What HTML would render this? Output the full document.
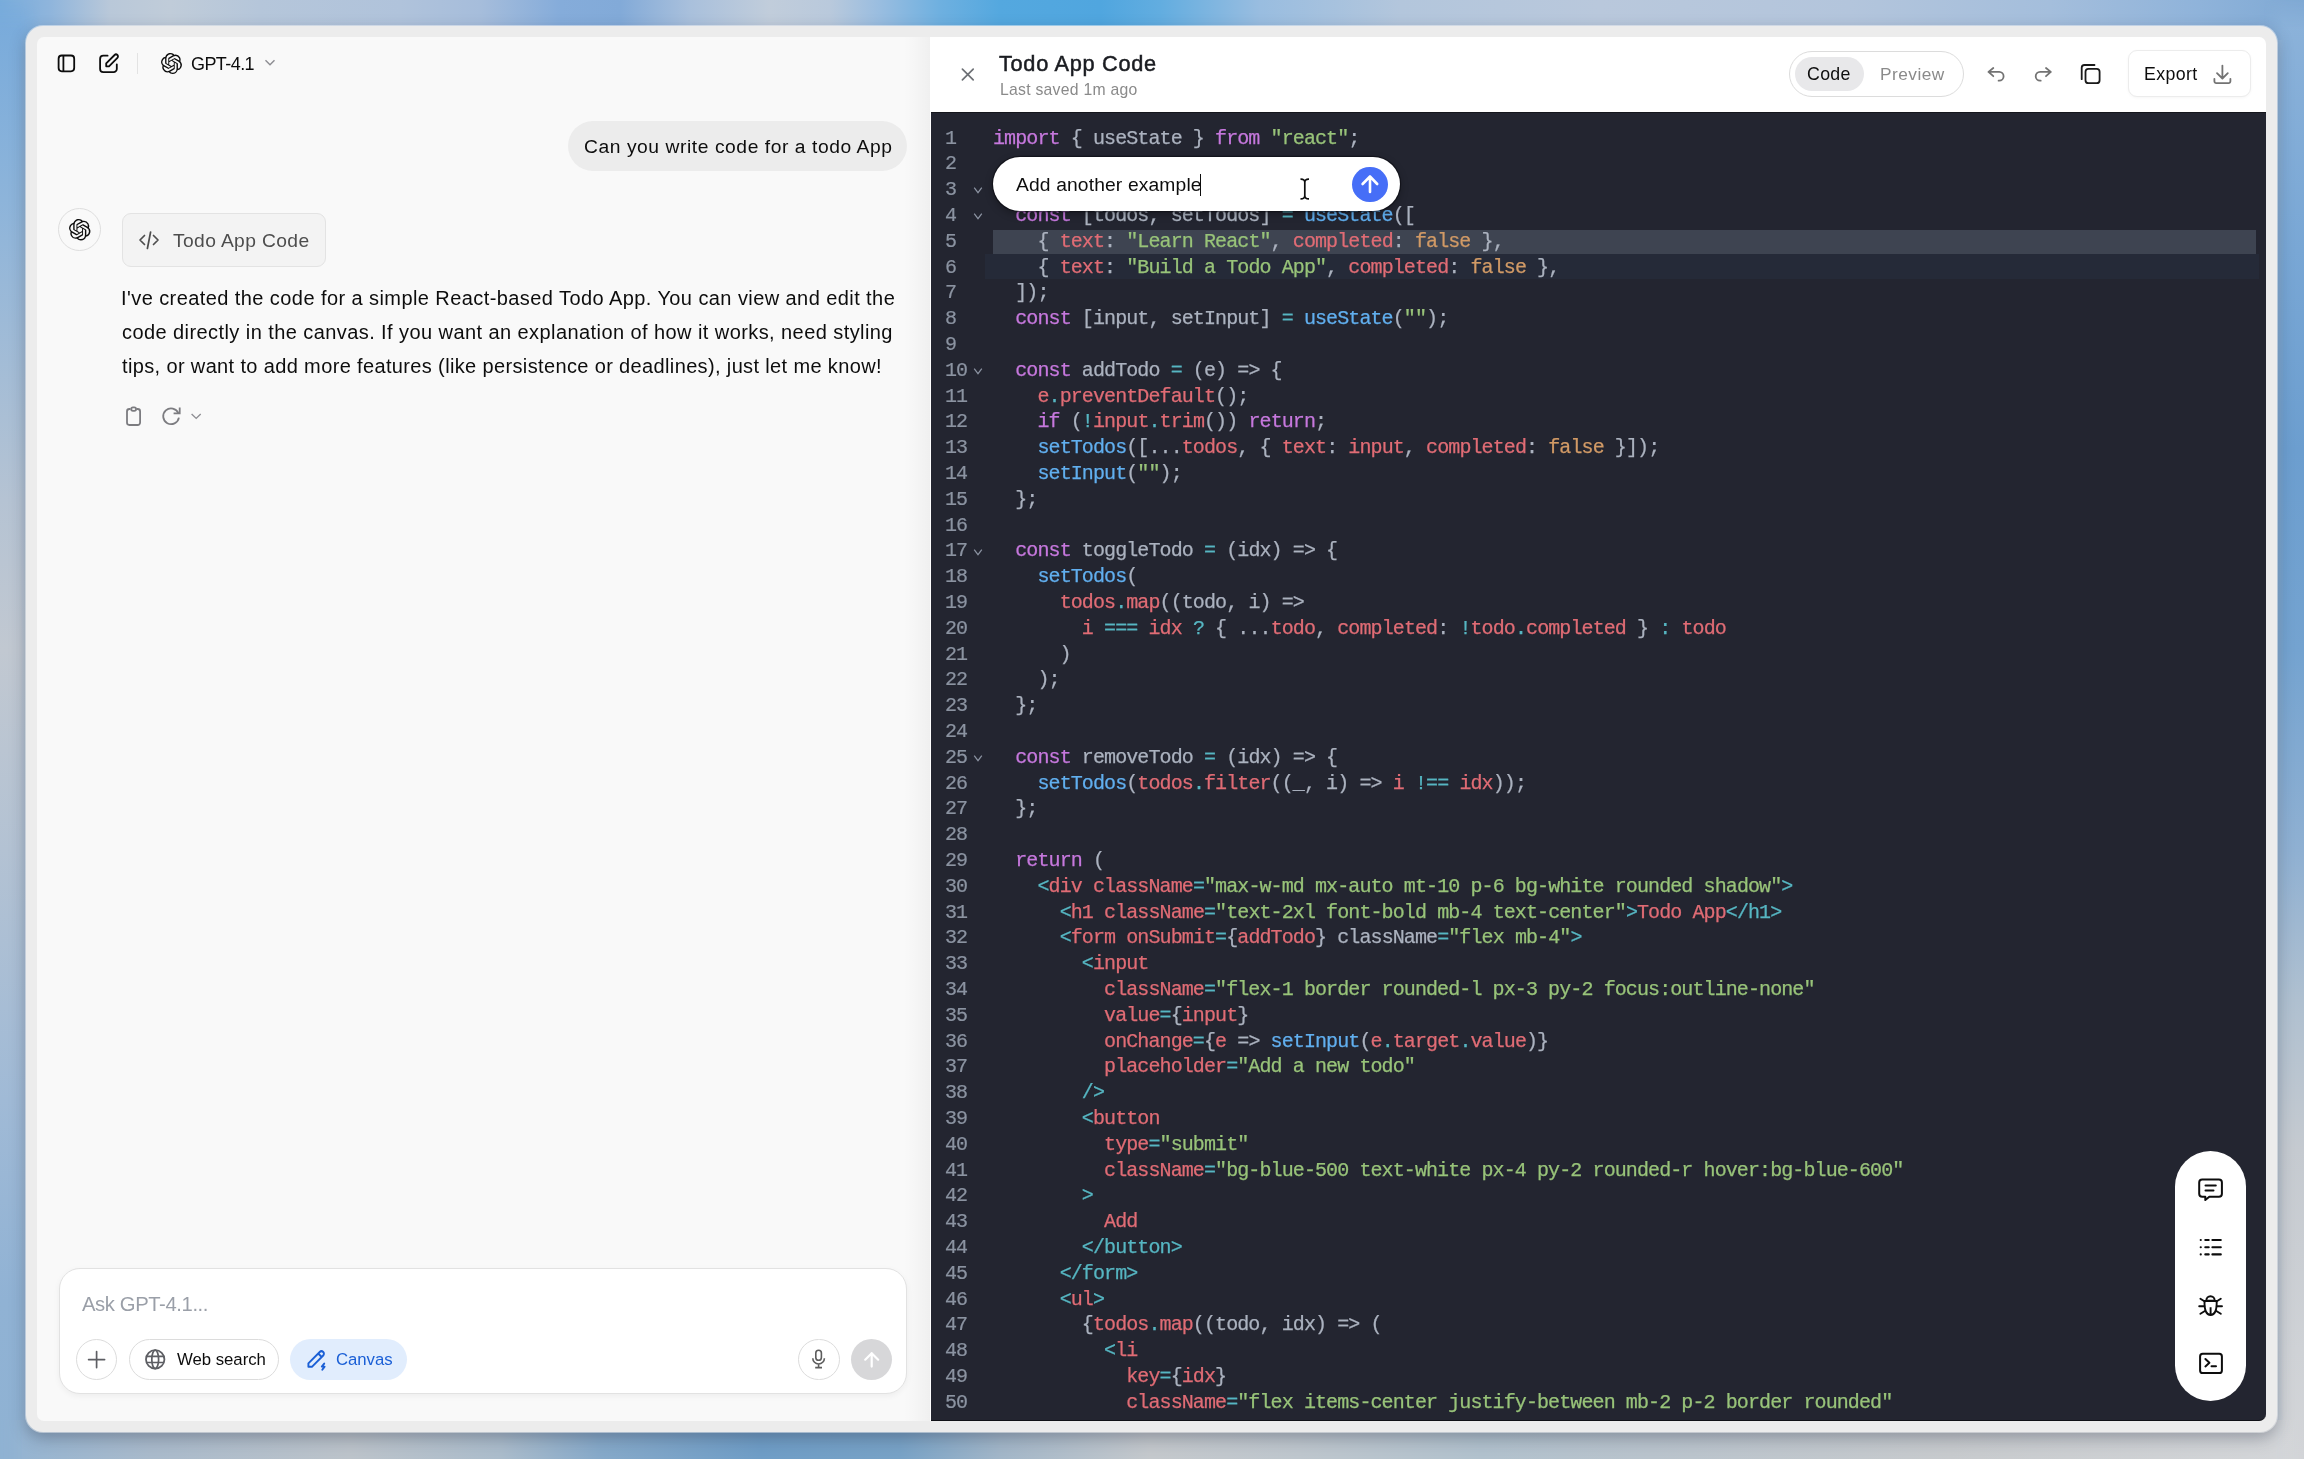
<!DOCTYPE html>
<html><head><meta charset="utf-8">
<style>
*{box-sizing:border-box;margin:0;padding:0}
html,body{width:2304px;height:1459px;overflow:hidden}
body{position:relative;font-family:"Liberation Sans",sans-serif;background:#a9bfd8}
.abs{position:absolute}
#bgt{left:0;top:0;width:2304px;height:40px;background:linear-gradient(90deg,#78acdc 0px,#8fb5dc 50px,#b9c8d9 110px,#c0ccd9 170px,#b5c6da 260px,#b0c3db 400px,#a6bddb 480px,#85acda 560px,#82aad8 620px,#a9c0dc 690px,#c1cddb 770px,#b9c9dc 830px,#99bde0 880px,#6eb0e0 940px,#54a8df 1000px,#50a6df 1100px,#62ade0 1160px,#99bde0 1260px,#b3c6dc 1400px,#b9c8dc 1600px,#b3c5dc 1850px,#a4bedc 2050px,#8fb3da 2200px,#7fa9d4 2304px)}
#bgl{-webkit-mask-image:linear-gradient(180deg,transparent 0px,#000 30px),linear-gradient(90deg,#000 0px,#000 20px,transparent 40px);-webkit-mask-composite:source-in;mask-composite:intersect;left:0;top:0;width:40px;height:1459px;background:linear-gradient(180deg,#77aadb 0px,#8db4da 200px,#b5c3d3 500px,#c1c8d1 650px,#b3c2d3 850px,#a0bad6 1100px,#90b2d4 1300px,#8fb2d3 1459px)}
#bgr{-webkit-mask-image:linear-gradient(180deg,transparent 0px,#000 30px),linear-gradient(270deg,#000 0px,#000 20px,transparent 40px);-webkit-mask-composite:source-in;mask-composite:intersect;left:2264px;top:0;width:40px;height:1459px;background:linear-gradient(180deg,#8db3da 0px,#79a7d5 250px,#6c9ecf 450px,#74a3d0 650px,#8fb0d2 850px,#afc0d0 1000px,#c5cad0 1150px,#cfd2d6 1350px,#d3d5d8 1459px)}
#bgb{-webkit-mask-image:linear-gradient(90deg,transparent 0px,#000 28px,#000 2276px,transparent 2304px);left:0;top:1420px;width:2304px;height:39px;background:linear-gradient(90deg,#92b3d2 0px,#a9bacb 150px,#bcc3ca 350px,#abbccb 500px,#86a9c9 600px,#6f9dc6 760px,#78a2c6 900px,#a2b6c8 1000px,#c4c8cc 1150px,#bec6cd 1300px,#b1c1cd 1480px,#b9c3cc 1650px,#c7cacd 1950px,#d4d6d9 2304px)}
#win{left:26px;top:26px;width:2251px;height:1406px;background:#ececec;border-radius:17px;box-shadow:0 0 0 1px rgba(255,255,255,.45),0 6px 16px rgba(40,50,70,.35)}
#left{left:37px;top:37px;width:894px;height:1384px;background:#f9f9f9;border-radius:7px 0 0 7px}
#rhead{left:931px;top:37px;width:1335px;height:75px;background:#fff;border-radius:0 7px 0 0}
#code{left:931px;top:111.5px;width:1335px;height:1309.5px;background:#232530;border-radius:0 0 7px 0;overflow:hidden;border-top:1px solid #15161c;border-bottom:1px solid #101116}
.ln{position:absolute;left:14px;will-change:transform;-webkit-text-stroke:0.2px currentColor;height:25.8px;line-height:25.8px;font-family:"Liberation Mono",monospace;font-size:20px;letter-spacing:-0.9px;color:#8b93a1;white-space:pre}
.cl{position:absolute;left:62px;will-change:transform;-webkit-text-stroke:0.25px currentColor;height:25.8px;line-height:25.8px;font-family:"Liberation Mono",monospace;font-size:20px;letter-spacing:-0.9px;color:#abb2bf;white-space:pre}
.fold{position:absolute;left:42.3px}
.t{position:absolute;white-space:nowrap;line-height:1;will-change:transform}
svg{overflow:visible}
</style></head><body>
<div id="bgt" class="abs"></div>
<div id="bgl" class="abs"></div>
<div id="bgr" class="abs"></div>
<div id="bgb" class="abs"></div>
<div id="win" class="abs"></div>
<div id="left" class="abs"></div>
<div class="abs" style="left:903px;top:37px;width:27px;height:1384px;background:linear-gradient(90deg,rgba(0,0,0,0),rgba(0,0,0,.01) 40%,rgba(0,0,0,.04))"></div>
<div class="abs" style="left:929.8px;top:37px;width:1.2px;height:1384px;background:#fff"></div>
<div id="rhead" class="abs"></div>

<!-- left header icons -->
<svg class="abs" style="left:50px;top:45px" width="80" height="40" viewBox="0 0 80 40">
  <rect x="8.6" y="10.5" width="15.6" height="15.8" rx="3.2" fill="none" stroke="#0d0d0d" stroke-width="1.8"/>
  <line x1="13.4" y1="10.5" x2="13.4" y2="26.3" stroke="#0d0d0d" stroke-width="1.8"/>
  <path d="M57.6 10.7 H53.3 a3.2 3.2 0 0 0 -3.2 3.2 V23.9 a3.2 3.2 0 0 0 3.2 3.2 H63.6 a3.2 3.2 0 0 0 3.2 -3.2 V19.3" fill="none" stroke="#0d0d0d" stroke-width="1.8" stroke-linecap="round"/>
  <path d="M56.2 21.3 V18.4 L64.6 10.0 a1.95 1.95 0 0 1 2.8 2.8 L59.0 21.3 Z" fill="none" stroke="#0d0d0d" stroke-width="1.8" stroke-linejoin="round"/>
</svg>
<div class="abs" style="left:137px;top:53px;width:1px;height:21px;background:#e3e3e3"></div>
<svg class="abs" style="left:160.8px;top:52.9px" width="21" height="21" viewBox="0 0 24 24"><path fill="#0d0d0d" d="M22.2819 9.8211a5.9847 5.9847 0 0 0-.5157-4.9108 6.0462 6.0462 0 0 0-6.5098-2.9A6.0651 6.0651 0 0 0 4.9807 4.1818a5.9847 5.9847 0 0 0-3.9977 2.9 6.0462 6.0462 0 0 0 .7427 7.0966 5.98 5.98 0 0 0 .511 4.9107 6.051 6.051 0 0 0 6.5146 2.9001A5.9847 5.9847 0 0 0 13.2599 24a6.0557 6.0557 0 0 0 5.7718-4.2058 5.9894 5.9894 0 0 0 3.9977-2.9001 6.0557 6.0557 0 0 0-.7475-7.0729zm-9.022 12.6081a4.4755 4.4755 0 0 1-2.8764-1.0408l.1419-.0804 4.7783-2.7582a.7948.7948 0 0 0 .3927-.6813v-6.7369l2.02 1.1686a.071.071 0 0 1 .038.052v5.5826a4.504 4.504 0 0 1-4.4945 4.4944zm-9.6607-4.1254a4.4708 4.4708 0 0 1-.5346-3.0137l.142.0852 4.783 2.7582a.7712.7712 0 0 0 .7806 0l5.8428-3.3685v2.3324a.0804.0804 0 0 1-.0332.0615L9.74 19.9502a4.4992 4.4992 0 0 1-6.1408-1.6464zM2.3408 7.8956a4.485 4.485 0 0 1 2.3655-1.9728V11.6a.7664.7664 0 0 0 .3879.6765l5.8144 3.3543-2.0201 1.1685a.0757.0757 0 0 1-.071 0l-4.8303-2.7865A4.504 4.504 0 0 1 2.3408 7.872zm16.5963 3.8558L13.1038 8.364 15.1192 7.2a.0757.0757 0 0 1 .071 0l4.8303 2.7913a4.4944 4.4944 0 0 1-.6765 8.1042v-5.6772a.79.79 0 0 0-.407-.667zm2.0107-3.0231l-.142-.0852-4.7735-2.7818a.7759.7759 0 0 0-.7854 0L9.409 9.2297V6.8974a.0662.0662 0 0 1 .0284-.0615l4.8303-2.7866a4.4992 4.4992 0 0 1 6.6802 4.66zM8.3065 12.863l-2.02-1.1638a.0804.0804 0 0 1-.038-.0567V6.0742a4.4992 4.4992 0 0 1 7.3757-3.4537l-.142.0805L8.704 5.459a.7948.7948 0 0 0-.3927.6813zm1.0976-2.3654l2.602-1.4998 2.6069 1.4998v2.9994l-2.5974 1.4997-2.6067-1.4997Z"/></svg>
<div class="t" style="left:190.5px;top:54.6px;font-size:18.0px;letter-spacing:-0.567px;color:#0d0d0d;">GPT-4.1</div>
<svg class="abs" style="left:262px;top:57px" width="16" height="12" viewBox="0 0 16 12"><path d="M3.5 3.2 L8 7.8 L12.5 3.2" fill="none" stroke="#8e8e93" stroke-width="1.4"/></svg>

<!-- user bubble -->
<div class="abs" style="left:568px;top:121px;width:339px;height:50px;border-radius:25px;background:#ececec"></div>
<div class="t" style="left:583.7px;top:136.55px;font-size:19.25px;letter-spacing:0.562px;color:#0d0d0d;">Can you write code for a todo App</div>

<!-- assistant -->
<div class="abs" style="left:58px;top:207.5px;width:43px;height:43px;border-radius:50%;border:1px solid #dedede;background:#f9f9f9"></div>
<svg class="abs" style="left:69px;top:218.5px" width="21.5" height="21.5" viewBox="0 0 24 24"><path fill="#0d0d0d" d="M22.2819 9.8211a5.9847 5.9847 0 0 0-.5157-4.9108 6.0462 6.0462 0 0 0-6.5098-2.9A6.0651 6.0651 0 0 0 4.9807 4.1818a5.9847 5.9847 0 0 0-3.9977 2.9 6.0462 6.0462 0 0 0 .7427 7.0966 5.98 5.98 0 0 0 .511 4.9107 6.051 6.051 0 0 0 6.5146 2.9001A5.9847 5.9847 0 0 0 13.2599 24a6.0557 6.0557 0 0 0 5.7718-4.2058 5.9894 5.9894 0 0 0 3.9977-2.9001 6.0557 6.0557 0 0 0-.7475-7.0729zm-9.022 12.6081a4.4755 4.4755 0 0 1-2.8764-1.0408l.1419-.0804 4.7783-2.7582a.7948.7948 0 0 0 .3927-.6813v-6.7369l2.02 1.1686a.071.071 0 0 1 .038.052v5.5826a4.504 4.504 0 0 1-4.4945 4.4944zm-9.6607-4.1254a4.4708 4.4708 0 0 1-.5346-3.0137l.142.0852 4.783 2.7582a.7712.7712 0 0 0 .7806 0l5.8428-3.3685v2.3324a.0804.0804 0 0 1-.0332.0615L9.74 19.9502a4.4992 4.4992 0 0 1-6.1408-1.6464zM2.3408 7.8956a4.485 4.485 0 0 1 2.3655-1.9728V11.6a.7664.7664 0 0 0 .3879.6765l5.8144 3.3543-2.0201 1.1685a.0757.0757 0 0 1-.071 0l-4.8303-2.7865A4.504 4.504 0 0 1 2.3408 7.872zm16.5963 3.8558L13.1038 8.364 15.1192 7.2a.0757.0757 0 0 1 .071 0l4.8303 2.7913a4.4944 4.4944 0 0 1-.6765 8.1042v-5.6772a.79.79 0 0 0-.407-.667zm2.0107-3.0231l-.142-.0852-4.7735-2.7818a.7759.7759 0 0 0-.7854 0L9.409 9.2297V6.8974a.0662.0662 0 0 1 .0284-.0615l4.8303-2.7866a4.4992 4.4992 0 0 1 6.6802 4.66zM8.3065 12.863l-2.02-1.1638a.0804.0804 0 0 1-.038-.0567V6.0742a4.4992 4.4992 0 0 1 7.3757-3.4537l-.142.0805L8.704 5.459a.7948.7948 0 0 0-.3927.6813zm1.0976-2.3654l2.602-1.4998 2.6069 1.4998v2.9994l-2.5974 1.4997-2.6067-1.4997Z"/></svg>
<div class="abs" style="left:122px;top:213px;width:204px;height:54px;border-radius:9px;background:#f3f3f3;border:1px solid #e3e3e3"></div>
<svg class="abs" style="left:137px;top:229px" width="24" height="22" viewBox="0 0 24 22"><path d="M7.5 6.5 L3 11 L7.5 15.5 M16.5 6.5 L21 11 L16.5 15.5 M13.6 3 L10.4 19.5" fill="none" stroke="#4d4d4d" stroke-width="1.7" stroke-linecap="round" stroke-linejoin="round"/></svg>
<div class="t" style="left:173.1px;top:230.65px;font-size:19.25px;letter-spacing:0.375px;color:#4d4d4d;">Todo App Code</div>

<div class="t" style="left:121.1px;top:287.8px;font-size:20.0px;letter-spacing:0.423px;color:#0d0d0d">I've created the code for a simple React-based Todo App. You can view and edit the</div>
<div class="t" style="left:121.5px;top:321.7px;font-size:20.0px;letter-spacing:0.424px;color:#0d0d0d">code directly in the canvas. If you want an explanation of how it works, need styling</div>
<div class="t" style="left:121.6px;top:356.0px;font-size:20.0px;letter-spacing:0.361px;color:#0d0d0d">tips, or want to add more features (like persistence or deadlines), just let me know!</div>

<svg class="abs" style="left:115px;top:395px" width="100" height="40" viewBox="0 0 100 40">
  <path d="M15.4 14 H14.4 a2.4 2.4 0 0 0 -2.4 2.4 V27.6 a2.4 2.4 0 0 0 2.4 2.4 H22.7 a2.4 2.4 0 0 0 2.4 -2.4 V16.4 a2.4 2.4 0 0 0 -2.4 -2.4 H21.7" fill="none" stroke="#7c7c80" stroke-width="1.8"/>
  <rect x="16.2" y="12.3" width="4.9" height="3.6" rx="1.8" fill="none" stroke="#7c7c80" stroke-width="1.8"/>
  <path d="M63.9 22.6 A7.9 7.9 0 1 1 63.4 18.2" fill="none" stroke="#7c7c80" stroke-width="1.8"/>
  <path d="M64.7 12.4 V18.4 H58.6" fill="none" stroke="#7c7c80" stroke-width="1.8"/>
  <path d="M76.6 19.1 L81.2 23.4 L85.7 19.1" fill="none" stroke="#8e8e93" stroke-width="1.4"/>
</svg>

<!-- input box -->
<div class="abs" style="left:59px;top:1267.5px;width:847.5px;height:126.5px;border-radius:21px;background:#fff;border:1px solid #e2e2e2;box-shadow:0 2px 6px rgba(0,0,0,.05)"></div>
<div class="t" style="left:81.7px;top:1294.4px;font-size:20.25px;letter-spacing:-0.4px;color:#9a9fa8;">Ask GPT-4.1...</div>
<div class="abs" style="left:76.3px;top:1338.8px;width:41px;height:41px;border-radius:50%;border:1px solid #dcdcdc"></div>
<svg class="abs" style="left:86px;top:1349px" width="22" height="22" viewBox="0 0 22 22"><path d="M10.6 2.6 V18.6 M2.6 10.6 H18.6" fill="none" stroke="#5d5e63" stroke-width="1.7" stroke-linecap="round"/></svg>
<div class="abs" style="left:128.8px;top:1338.8px;width:150px;height:41px;border-radius:21px;border:1px solid #dcdcdc"></div>
<svg class="abs" style="left:143px;top:1347px" width="26" height="26" viewBox="0 0 26 26">
  <circle cx="12.2" cy="12.4" r="9.2" fill="none" stroke="#5d5e63" stroke-width="1.8"/>
  <ellipse cx="12.2" cy="12.4" rx="3.4" ry="9.2" fill="none" stroke="#5d5e63" stroke-width="1.7"/>
  <path d="M3.6 9.3 H20.8 M3.6 15.5 H20.8" fill="none" stroke="#5d5e63" stroke-width="1.7"/>
</svg>
<div class="t" style="left:176.5px;top:1352.25px;font-size:16.75px;letter-spacing:-0.022px;color:#0d0d0d;">Web search</div>
<div class="abs" style="left:290.2px;top:1338.8px;width:117px;height:41px;border-radius:21px;background:#e1edfd"></div>
<svg class="abs" style="left:300px;top:1345px" width="30" height="28" viewBox="0 0 30 28">
  <path d="M8.4 21.8 L8.4 18.3 L19.7 7.0 a2.4 2.4 0 0 1 3.5 3.5 L11.9 21.8 Z M18.2 8.5 L21.7 12" fill="none" stroke="#1a5fd6" stroke-width="1.9" stroke-linejoin="round"/>
  <path d="M24.2 18.6 L21.8 21.6 L24.6 21.6 L22.3 24.8" fill="none" stroke="#1a5fd6" stroke-width="1.9" stroke-linejoin="round" stroke-linecap="round"/>
</svg>
<div class="t" style="left:336.2px;top:1352.25px;font-size:16.75px;letter-spacing:-0.04px;color:#1a5fd6;">Canvas</div>
<div class="abs" style="left:798.2px;top:1338.8px;width:41.4px;height:41.4px;border-radius:50%;border:1px solid #dcdcdc"></div>
<svg class="abs" style="left:808px;top:1348px" width="22" height="22" viewBox="0 0 22 22">
  <rect x="7.8" y="2.2" width="5.6" height="10" rx="2.8" fill="none" stroke="#5d5d5d" stroke-width="1.6"/>
  <path d="M4.8 10.2 a5.8 5.8 0 0 0 11.6 0 M10.6 16 V19.6 M7.2 19.6 H14" fill="none" stroke="#5d5d5d" stroke-width="1.6"/>
</svg>
<div class="abs" style="left:851px;top:1338.8px;width:41px;height:41px;border-radius:50%;background:#d7d7d9"></div>
<svg class="abs" style="left:861px;top:1349px" width="22" height="22" viewBox="0 0 22 22"><path d="M10.7 17.6 V4.2 M4.2 10.7 L10.7 4.2 L17.2 10.7" fill="none" stroke="#fff" stroke-width="2.2" stroke-linecap="round" stroke-linejoin="round"/></svg>

<!-- right header -->
<svg class="abs" style="left:958px;top:65px" width="20" height="20" viewBox="0 0 20 20"><path d="M4.4 4.2 L15.2 14.8 M15.2 4.2 L4.4 14.8" fill="none" stroke="#6d7075" stroke-width="1.7" stroke-linecap="round"/></svg>
<div class="t" style="left:999.0px;top:52.7px;font-size:21.75px;letter-spacing:0.692px;-webkit-text-stroke:0.5px #1a1c21;color:#1a1c21;">Todo App Code</div>
<div class="t" style="left:999.6px;top:82.35px;font-size:15.75px;letter-spacing:0.262px;color:#8a8a8a;">Last saved 1m ago</div>
<div class="abs" style="left:1788.7px;top:50.9px;width:175.5px;height:46px;border-radius:23px;border:1px solid #dcdcdc;background:#fff"></div>
<div class="abs" style="left:1794.5px;top:56.9px;width:69.5px;height:34px;border-radius:17px;background:#e8e8ea"></div>
<div class="t" style="left:1807.1px;top:66.2px;font-size:17.75px;letter-spacing:0.333px;color:#0d0d0d;">Code</div>
<div class="t" style="left:1880.0px;top:65.65px;font-size:17.25px;letter-spacing:0.483px;color:#8a8a8a;">Preview</div>
<svg class="abs" style="left:1980px;top:55px" width="130" height="40" viewBox="0 0 130 40">
  <path d="M13.3 13 L8.5 16.9 L13.3 21.2 M8.5 16.9 H19.2 a4.4 4.4 0 0 1 0 8.8 H18.6" fill="none" stroke="#737373" stroke-width="1.8" stroke-linecap="round" stroke-linejoin="round"/>
  <path d="M66 13 L70.8 16.9 L66 21.2 M70.8 16.9 H60.1 a4.4 4.4 0 0 0 0 8.8 H60.7" fill="none" stroke="#737373" stroke-width="1.8" stroke-linecap="round" stroke-linejoin="round"/>
  <path d="M102.4 70 Z" />
  <path d="M102.6 24.2 a0 0 0 0 1 0 0 V12.8 a2.8 2.8 0 0 1 2.8 -2.8 H115.4" fill="none" stroke="#1a1a1a" stroke-width="1.8" stroke-linecap="round" transform="translate(-0.9,0)"/>
  <rect x="105.5" y="13.8" width="14.1" height="14.4" rx="3" fill="none" stroke="#1a1a1a" stroke-width="1.8"/>
</svg>
<div class="abs" style="left:2127.6px;top:50.3px;width:123px;height:47.2px;border-radius:9px;border:1px solid #ececec;background:#fff;box-shadow:0 1px 3px rgba(0,0,0,.04)"></div>
<div class="t" style="left:2144.0px;top:66.4px;font-size:17.75px;letter-spacing:0.4px;color:#0d0d0d;">Export</div>
<svg class="abs" style="left:2210px;top:62px" width="26" height="26" viewBox="0 0 26 26"><path d="M12.4 3.6 V16.4 M7 11.1 L12.4 16.5 L17.8 11.1 M4.4 16.8 V19.3 a1.8 1.8 0 0 0 1.8 1.8 H18.6 a1.8 1.8 0 0 0 1.8 -1.8 V16.8" fill="none" stroke="#737373" stroke-width="1.8" stroke-linecap="round" stroke-linejoin="round"/></svg>

<!-- code -->
<div id="code" class="abs">
<div class="abs" style="left:61.6px;top:117.4px;width:1263.4px;height:23.8px;background:#3e4451"></div>
<div class="abs" style="left:54px;top:141.2px;width:1273.7px;height:25.8px;background:#252a38"></div>
<div class="ln" style="top:13.03px">1</div>
<div class="cl" style="top:13.03px"><span style="color:#c678dd">import</span> { useState } <span style="color:#c678dd">from</span> <span style="color:#98c379">&quot;react&quot;</span>;</div>
<div class="ln" style="top:38.83px">2</div>
<div class="cl" style="top:38.83px"></div>
<div class="ln" style="top:64.63px">3</div>
<svg class="fold" style="top:73.83px" width="10" height="8" viewBox="0 0 10 8"><path d="M1.2 1.6 L5 6.6 L8.8 1.6" fill="none" stroke="#8b93a1" stroke-width="1.25"/></svg>
<div class="cl" style="top:64.63px"><span style="color:#c678dd">export default function</span> <span style="color:#61afef">TodoApp</span>() {</div>
<div class="ln" style="top:90.43px">4</div>
<svg class="fold" style="top:99.63px" width="10" height="8" viewBox="0 0 10 8"><path d="M1.2 1.6 L5 6.6 L8.8 1.6" fill="none" stroke="#8b93a1" stroke-width="1.25"/></svg>
<div class="cl" style="top:90.43px">  <span style="color:#c678dd">const</span> [todos, setTodos] <span style="color:#56b6c2">=</span> <span style="color:#61afef">useState</span>([</div>
<div class="ln" style="top:116.23px">5</div>
<div class="cl" style="top:116.23px">    { <span style="color:#e06c75">text</span>: <span style="color:#98c379">&quot;Learn React&quot;</span>, <span style="color:#e06c75">completed</span>: <span style="color:#d19a66">false</span> },</div>
<div class="ln" style="top:142.03px">6</div>
<div class="cl" style="top:142.03px">    { <span style="color:#e06c75">text</span>: <span style="color:#98c379">&quot;Build a Todo App&quot;</span>, <span style="color:#e06c75">completed</span>: <span style="color:#d19a66">false</span> },</div>
<div class="ln" style="top:167.83px">7</div>
<div class="cl" style="top:167.83px">  ]);</div>
<div class="ln" style="top:193.63px">8</div>
<div class="cl" style="top:193.63px">  <span style="color:#c678dd">const</span> [input, setInput] <span style="color:#56b6c2">=</span> <span style="color:#61afef">useState</span>(<span style="color:#98c379">&quot;&quot;</span>);</div>
<div class="ln" style="top:219.43px">9</div>
<div class="cl" style="top:219.43px"></div>
<div class="ln" style="top:245.23px">10</div>
<svg class="fold" style="top:254.43px" width="10" height="8" viewBox="0 0 10 8"><path d="M1.2 1.6 L5 6.6 L8.8 1.6" fill="none" stroke="#8b93a1" stroke-width="1.25"/></svg>
<div class="cl" style="top:245.23px">  <span style="color:#c678dd">const</span> addTodo <span style="color:#56b6c2">=</span> (e) =&gt; {</div>
<div class="ln" style="top:271.03px">11</div>
<div class="cl" style="top:271.03px">    <span style="color:#e06c75">e</span><span style="color:#56b6c2">.</span><span style="color:#e06c75">preventDefault</span>();</div>
<div class="ln" style="top:296.83px">12</div>
<div class="cl" style="top:296.83px">    <span style="color:#c678dd">if</span> (<span style="color:#56b6c2">!</span><span style="color:#e06c75">input</span><span style="color:#56b6c2">.</span><span style="color:#e06c75">trim</span>()) <span style="color:#c678dd">return</span>;</div>
<div class="ln" style="top:322.63px">13</div>
<div class="cl" style="top:322.63px">    <span style="color:#61afef">setTodos</span>([...<span style="color:#e06c75">todos</span>, { <span style="color:#e06c75">text</span>: <span style="color:#e06c75">input</span>, <span style="color:#e06c75">completed</span>: <span style="color:#d19a66">false</span> }]);</div>
<div class="ln" style="top:348.43px">14</div>
<div class="cl" style="top:348.43px">    <span style="color:#61afef">setInput</span>(<span style="color:#98c379">&quot;&quot;</span>);</div>
<div class="ln" style="top:374.23px">15</div>
<div class="cl" style="top:374.23px">  };</div>
<div class="ln" style="top:400.03px">16</div>
<div class="cl" style="top:400.03px"></div>
<div class="ln" style="top:425.83px">17</div>
<svg class="fold" style="top:435.03px" width="10" height="8" viewBox="0 0 10 8"><path d="M1.2 1.6 L5 6.6 L8.8 1.6" fill="none" stroke="#8b93a1" stroke-width="1.25"/></svg>
<div class="cl" style="top:425.83px">  <span style="color:#c678dd">const</span> toggleTodo <span style="color:#56b6c2">=</span> (idx) =&gt; {</div>
<div class="ln" style="top:451.63px">18</div>
<div class="cl" style="top:451.63px">    <span style="color:#61afef">setTodos</span>(</div>
<div class="ln" style="top:477.43px">19</div>
<div class="cl" style="top:477.43px">      <span style="color:#e06c75">todos</span><span style="color:#56b6c2">.</span><span style="color:#e06c75">map</span>((todo, i) =&gt;</div>
<div class="ln" style="top:503.23px">20</div>
<div class="cl" style="top:503.23px">        <span style="color:#e06c75">i</span> <span style="color:#56b6c2">===</span> <span style="color:#e06c75">idx</span> <span style="color:#56b6c2">?</span> { ...<span style="color:#e06c75">todo</span>, <span style="color:#e06c75">completed</span>: <span style="color:#56b6c2">!</span><span style="color:#e06c75">todo</span><span style="color:#56b6c2">.</span><span style="color:#e06c75">completed</span> } <span style="color:#56b6c2">:</span> <span style="color:#e06c75">todo</span></div>
<div class="ln" style="top:529.03px">21</div>
<div class="cl" style="top:529.03px">      )</div>
<div class="ln" style="top:554.83px">22</div>
<div class="cl" style="top:554.83px">    );</div>
<div class="ln" style="top:580.63px">23</div>
<div class="cl" style="top:580.63px">  };</div>
<div class="ln" style="top:606.43px">24</div>
<div class="cl" style="top:606.43px"></div>
<div class="ln" style="top:632.23px">25</div>
<svg class="fold" style="top:641.43px" width="10" height="8" viewBox="0 0 10 8"><path d="M1.2 1.6 L5 6.6 L8.8 1.6" fill="none" stroke="#8b93a1" stroke-width="1.25"/></svg>
<div class="cl" style="top:632.23px">  <span style="color:#c678dd">const</span> removeTodo <span style="color:#56b6c2">=</span> (idx) =&gt; {</div>
<div class="ln" style="top:658.03px">26</div>
<div class="cl" style="top:658.03px">    <span style="color:#61afef">setTodos</span>(<span style="color:#e06c75">todos</span><span style="color:#56b6c2">.</span><span style="color:#e06c75">filter</span>((_, i) =&gt; <span style="color:#e06c75">i</span> <span style="color:#56b6c2">!==</span> <span style="color:#e06c75">idx</span>));</div>
<div class="ln" style="top:683.83px">27</div>
<div class="cl" style="top:683.83px">  };</div>
<div class="ln" style="top:709.63px">28</div>
<div class="cl" style="top:709.63px"></div>
<div class="ln" style="top:735.43px">29</div>
<div class="cl" style="top:735.43px">  <span style="color:#c678dd">return</span> (</div>
<div class="ln" style="top:761.23px">30</div>
<div class="cl" style="top:761.23px">    <span style="color:#56b6c2">&lt;</span><span style="color:#e06c75">div</span> <span style="color:#e06c75">className</span><span style="color:#56b6c2">=</span><span style="color:#98c379">&quot;max-w-md mx-auto mt-10 p-6 bg-white rounded shadow&quot;</span><span style="color:#56b6c2">&gt;</span></div>
<div class="ln" style="top:787.03px">31</div>
<div class="cl" style="top:787.03px">      <span style="color:#56b6c2">&lt;</span><span style="color:#e06c75">h1</span> <span style="color:#e06c75">className</span><span style="color:#56b6c2">=</span><span style="color:#98c379">&quot;text-2xl font-bold mb-4 text-center&quot;</span><span style="color:#56b6c2">&gt;</span><span style="color:#e06c75">Todo App</span><span style="color:#56b6c2">&lt;/h1&gt;</span></div>
<div class="ln" style="top:812.83px">32</div>
<div class="cl" style="top:812.83px">      <span style="color:#56b6c2">&lt;</span><span style="color:#e06c75">form</span> <span style="color:#e06c75">onSubmit</span><span style="color:#56b6c2">=</span>{<span style="color:#e06c75">addTodo</span>} className<span style="color:#56b6c2">=</span><span style="color:#98c379">&quot;flex mb-4&quot;</span><span style="color:#56b6c2">&gt;</span></div>
<div class="ln" style="top:838.63px">33</div>
<div class="cl" style="top:838.63px">        <span style="color:#56b6c2">&lt;</span><span style="color:#e06c75">input</span></div>
<div class="ln" style="top:864.43px">34</div>
<div class="cl" style="top:864.43px">          <span style="color:#e06c75">className</span><span style="color:#56b6c2">=</span><span style="color:#98c379">&quot;flex-1 border rounded-l px-3 py-2 focus:outline-none&quot;</span></div>
<div class="ln" style="top:890.23px">35</div>
<div class="cl" style="top:890.23px">          <span style="color:#e06c75">value</span><span style="color:#56b6c2">=</span>{<span style="color:#e06c75">input</span>}</div>
<div class="ln" style="top:916.03px">36</div>
<div class="cl" style="top:916.03px">          <span style="color:#e06c75">onChange</span><span style="color:#56b6c2">=</span>{<span style="color:#e06c75">e</span> =&gt; <span style="color:#61afef">setInput</span>(<span style="color:#e06c75">e</span><span style="color:#56b6c2">.</span><span style="color:#e06c75">target</span><span style="color:#56b6c2">.</span><span style="color:#e06c75">value</span>)}</div>
<div class="ln" style="top:941.83px">37</div>
<div class="cl" style="top:941.83px">          <span style="color:#e06c75">placeholder</span><span style="color:#56b6c2">=</span><span style="color:#98c379">&quot;Add a new todo&quot;</span></div>
<div class="ln" style="top:967.63px">38</div>
<div class="cl" style="top:967.63px">        <span style="color:#56b6c2">/&gt;</span></div>
<div class="ln" style="top:993.43px">39</div>
<div class="cl" style="top:993.43px">        <span style="color:#56b6c2">&lt;</span><span style="color:#e06c75">button</span></div>
<div class="ln" style="top:1019.23px">40</div>
<div class="cl" style="top:1019.23px">          <span style="color:#e06c75">type</span><span style="color:#56b6c2">=</span><span style="color:#98c379">&quot;submit&quot;</span></div>
<div class="ln" style="top:1045.03px">41</div>
<div class="cl" style="top:1045.03px">          <span style="color:#e06c75">className</span><span style="color:#56b6c2">=</span><span style="color:#98c379">&quot;bg-blue-500 text-white px-4 py-2 rounded-r hover:bg-blue-600&quot;</span></div>
<div class="ln" style="top:1070.83px">42</div>
<div class="cl" style="top:1070.83px">        <span style="color:#56b6c2">&gt;</span></div>
<div class="ln" style="top:1096.63px">43</div>
<div class="cl" style="top:1096.63px">          <span style="color:#e06c75">Add</span></div>
<div class="ln" style="top:1122.43px">44</div>
<div class="cl" style="top:1122.43px">        <span style="color:#56b6c2">&lt;/button&gt;</span></div>
<div class="ln" style="top:1148.23px">45</div>
<div class="cl" style="top:1148.23px">      <span style="color:#56b6c2">&lt;/form&gt;</span></div>
<div class="ln" style="top:1174.03px">46</div>
<div class="cl" style="top:1174.03px">      <span style="color:#56b6c2">&lt;</span><span style="color:#e06c75">ul</span><span style="color:#56b6c2">&gt;</span></div>
<div class="ln" style="top:1199.83px">47</div>
<div class="cl" style="top:1199.83px">        {<span style="color:#e06c75">todos</span><span style="color:#56b6c2">.</span><span style="color:#e06c75">map</span>((todo, idx) =&gt; (</div>
<div class="ln" style="top:1225.63px">48</div>
<div class="cl" style="top:1225.63px">          <span style="color:#56b6c2">&lt;</span><span style="color:#e06c75">li</span></div>
<div class="ln" style="top:1251.43px">49</div>
<div class="cl" style="top:1251.43px">            <span style="color:#e06c75">key</span><span style="color:#56b6c2">=</span>{<span style="color:#e06c75">idx</span>}</div>
<div class="ln" style="top:1277.23px">50</div>
<div class="cl" style="top:1277.23px">            <span style="color:#e06c75">className</span><span style="color:#56b6c2">=</span><span style="color:#98c379">&quot;flex items-center justify-between mb-2 p-2 border rounded&quot;</span></div>
<div class="ln" style="top:1303.03px">51</div>
<div class="cl" style="top:1303.03px">          <span style="color:#56b6c2">&gt;</span></div>
</div>

<!-- prompt popup -->
<div class="abs" style="left:993px;top:157.1px;width:406.6px;height:53.8px;border-radius:27px;background:#fff;box-shadow:0 0 0 1.2px rgba(10,10,14,.55),0 3px 8px rgba(0,0,0,.3)"></div>
<div class="t" style="left:1015.5px;top:174.9px;font-size:19.25px;letter-spacing:0.139px;color:#0d0d0d;">Add another example</div>
<div class="abs" style="left:1200px;top:174px;width:1px;height:21.5px;background:#0d0d0d"></div>
<svg class="abs" style="left:1296px;top:175px" width="18" height="28" viewBox="0 0 18 28"><path d="M4.5 4.2 Q8.8 4 8.8 7.5 V20.5 Q8.8 24 4.5 23.9 M13 4.2 Q8.8 4 8.8 7.5 M8.8 20.5 Q8.8 24 13 23.9" fill="none" stroke="#0d0d0d" stroke-width="1.7"/></svg>
<div class="abs" style="left:1352.4px;top:166.8px;width:35.2px;height:35.2px;border-radius:50%;background:#466ef7"></div>
<svg class="abs" style="left:1352px;top:166.9px" width="36" height="36" viewBox="0 0 36 36"><path d="M18 25 V10 M10.6 17 L18 9.5 L25.2 17" fill="none" stroke="#fff" stroke-width="2.6" stroke-linecap="round" stroke-linejoin="round"/></svg>

<!-- floating toolbar -->
<div class="abs" style="left:2175px;top:1151px;width:71px;height:250px;border-radius:35.5px;background:#fff"></div>
<svg class="abs" style="left:2190px;top:1170px" width="40" height="220" viewBox="0 0 40 220">
  <path d="M12.2 9.5 H28.9 a3 3 0 0 1 3 3 V23.7 a3 3 0 0 1 -3 3 H19.3 L15.3 30 V26.7 H12.2 a3 3 0 0 1 -3 -3 V12.5 a3 3 0 0 1 3 -3 Z" fill="none" stroke="#0d0d0d" stroke-width="2" stroke-linejoin="round"/>
  <path d="M15.5 15.6 H25.8 M15.5 20.5 H23.5" fill="none" stroke="#0d0d0d" stroke-width="2" stroke-linecap="round"/>
  <path d="M10.7 70 H10.8 M15.3 70 H18.7 M22.4 70 H30.8 M10.7 77.2 H10.8 M15.3 77.2 H18.7 M22.4 77.2 H30.8 M10.7 84.4 H10.8 M15.3 84.4 H18.7 M22.4 84.4 H30.8" fill="none" stroke="#0d0d0d" stroke-width="2.1" stroke-linecap="round"/>
  <path d="M16.3 130.6 a4.2 4.4 0 0 1 8.4 0 Z" fill="none" stroke="#0d0d0d" stroke-width="1.9" stroke-linejoin="round"/>
  <path d="M14.5 131 H26.7 Q27 145 20.6 145 Q14.2 145 14.5 131 Z M20.6 137.2 V144" fill="none" stroke="#0d0d0d" stroke-width="1.9" stroke-linejoin="round"/>
  <path d="M10.4 128.7 L14.8 131.5 M9.2 136.2 H14.4 M10.4 143.7 L14.9 141 M30.8 128.7 L26.4 131.5 M32 136.2 H26.8 M30.8 143.7 L26.3 141" fill="none" stroke="#0d0d0d" stroke-width="1.9" stroke-linecap="round"/>
  <rect x="10.1" y="183.8" width="21.8" height="19.2" rx="2.6" fill="none" stroke="#0d0d0d" stroke-width="2"/>
  <path d="M15.4 189 L19.4 192.8 L15.4 196.4 M21.5 196.2 H26" fill="none" stroke="#0d0d0d" stroke-width="2" stroke-linecap="round" stroke-linejoin="round"/>
</svg>
</body></html>
